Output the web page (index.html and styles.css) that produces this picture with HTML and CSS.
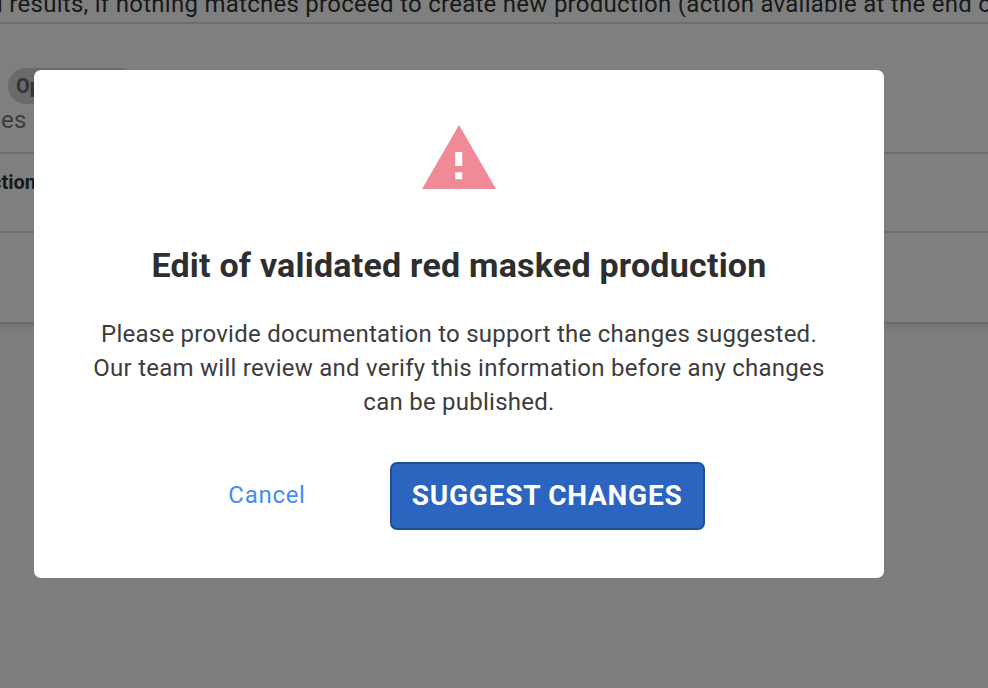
FILE: index.html
```html
<!DOCTYPE html>
<html lang="en">
<head>
  <meta charset="UTF-8" />
  <meta name="viewport" content="width=device-width, initial-scale=1.0" />
  <title>Productions</title>
  <link rel="stylesheet" href="styles.css">
</head>
<body>
  <div class="results-card">
    <p class="results-hint">l results, if nothing matches proceed to create new production (action available at the end o</p>

    <div class="result-summary">
      <span class="status-pill">Op</span>
      <span class="result-count">es</span>
    </div>

    <div class="result-title">ction</div>
    <div class="result-footer"></div>
  </div>

  <div class="overlay">
    <div class="modal" role="dialog" aria-labelledby="modal-title">
      <svg class="warning-icon" viewBox="0 0 74 64" aria-hidden="true">
        <path fill-rule="evenodd" d="M37 0L74 64H0L37 0ZM33.2 27V41H40.2V27H33.2ZM33.2 47.3V54.3H40.2V47.3H33.2Z" />
      </svg>
      <h1 id="modal-title">Edit of validated red masked production</h1>
      <p class="modal-text">Please provide documentation to support the changes suggested. Our team will review and verify this information before any changes can be published.</p>
      <div class="modal-buttons">
        <button class="cancel-button">Cancel</button>
        <button class="suggest-button">SUGGEST CHANGES</button>
      </div>
    </div>
  </div>
</body>
</html>
```
FILE: styles.css
```css
* {
  box-sizing: border-box;
}

body {
  font-family: Roboto, Arial, sans-serif;
  background: #fdfdfd;
  margin: 0;
  height: 100vh;
  overflow: hidden;
}

/* Results behind the modal */
.results-card {
  height: 322px;
  margin: 0 -12px;
  padding: 0 12px;
  background: #fff;
  color: #333;
  box-shadow: 0 2px 2px rgba(0, 0, 0, 0.08), 0 4px 10px rgba(0, 0, 0, 0.12);
}

.results-hint {
  height: 24px;
  margin: 0 0 0 -3px;
  border-bottom: 2px solid #dcdcdc;
  font-size: 24px;
  line-height: 8px;
  letter-spacing: 0.27px;
  white-space: nowrap;
}

.result-summary {
  display: flex;
  flex-direction: column;
  height: 130px;
  padding-top: 44px;
  border-bottom: 2px solid #dcdcdc;
}

.status-pill {
  width: 130px;
  height: 36px;
  margin-left: 8px;
  padding-left: 8px;
  border-radius: 18px;
  background: #d4d4d4;
  color: #666;
  font-size: 20px;
  font-weight: bold;
  line-height: 36px;
}

.result-count {
  margin-left: 1px;
  color: #777;
  font-size: 24px;
  line-height: 32px;
  letter-spacing: 0.24px;
}

.result-title {
  height: 79px;
  border-bottom: 2px solid #dcdcdc;
  margin-left: -9px;
  padding-top: 16px;
  font-size: 20px;
  font-weight: bold;
  line-height: 24px;
}

/* Modal */
.overlay {
  position: fixed;
  inset: 0;
  padding: 70px 34px;
  background: rgba(0, 0, 0, 0.5);
}

.modal {
  display: flex;
  flex-direction: column;
  align-items: center;
  width: 850px;
  height: 508px;
  padding: 55px 50px 48px;
  border-radius: 7px;
  background: #fff;
  text-align: center;
}

.warning-icon {
  width: 74px;
  height: 64px;
  fill: #f08a96;
}

h1 {
  margin: 56px 0 32px;
  color: #2e2e2e;
  font-size: 34px;
  line-height: 40px;
  letter-spacing: 0.22px;
  white-space: nowrap;
}

.modal-text {
  margin: 0;
  color: #3c3c3c;
  font-size: 24px;
  line-height: 34px;
  letter-spacing: 0.25px;
}

.modal-buttons {
  display: flex;
  align-items: center;
  gap: 84px;
  margin: auto 0 0 15px;
}

button {
  padding: 0;
  border: none;
  font-family: inherit;
  cursor: pointer;
}

.cancel-button {
  padding-bottom: 2px;
  background: none;
  color: #438ef5;
  font-size: 24px;
  letter-spacing: 0.7px;
}

.suggest-button {
  width: 315px;
  height: 68px;
  padding-bottom: 2px;
  border: 2px solid #1f4f98;
  border-radius: 7px;
  background: #2b65c0;
  color: #fff;
  font-size: 28px;
  font-weight: bold;
  letter-spacing: 0.74px;
}
```
